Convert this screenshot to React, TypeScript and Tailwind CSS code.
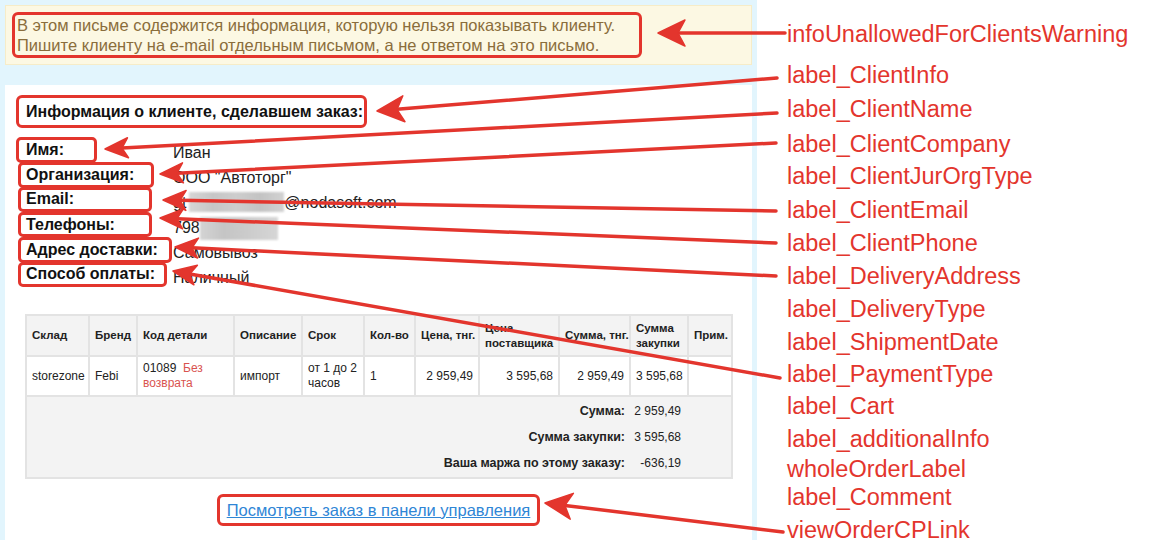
import React from 'react';

const RED = '#e3352d';

type Arr = { x1: number; y1: number; x2: number; y2: number; big?: boolean };

const arrows: Arr[] = [
  { x1: 785, y1: 33, x2: 658, y2: 33, big: true },
  { x1: 777, y1: 78, x2: 377, y2: 111, big: true },
  { x1: 777, y1: 113, x2: 105, y2: 149 },
  { x1: 776, y1: 143, x2: 160, y2: 174 },
  { x1: 776, y1: 211, x2: 163, y2: 200 },
  { x1: 776, y1: 243, x2: 160, y2: 218 },
  { x1: 776, y1: 276, x2: 175, y2: 247 },
  { x1: 780, y1: 378, x2: 173, y2: 271 },
  { x1: 783, y1: 532, x2: 545, y2: 503, big: true },
];

function Arrow({ x1, y1, x2, y2, big }: Arr) {
  const dx = x2 - x1;
  const dy = y2 - y1;
  const len = Math.hypot(dx, dy);
  const ux = dx / len;
  const uy = dy / len;
  const nx = -uy;
  const ny = ux;
  const L = big ? 27 : 23;
  const W = big ? 13 : 10;
  const N = big ? 20 : 17;
  const bx = x2 - ux * L;
  const by = y2 - uy * L;
  const pts = `${x2},${y2} ${bx + nx * W},${by + ny * W} ${x2 - ux * N},${y2 - uy * N} ${bx - nx * W},${by - ny * W}`;
  return (
    <g>
      <line x1={x1} y1={y1} x2={x2 - ux * N} y2={y2 - uy * N} stroke={RED} strokeWidth={3.5} strokeLinecap="round" />
      <polygon points={pts} fill={RED} stroke={RED} strokeWidth={1.5} strokeLinejoin="round" />
    </g>
  );
}

const notes = [
  { text: 'infoUnallowedForClientsWarning', cls: 'h-[41px]' },
  { text: 'label_ClientInfo', cls: 'h-[34px]' },
  { text: 'label_ClientName', cls: 'h-[35px]' },
  { text: 'label_ClientCompany', cls: 'h-[32px]' },
  { text: 'label_ClientJurOrgType', cls: 'h-[34px]' },
  { text: 'label_ClientEmail', cls: 'h-[33px]' },
  { text: 'label_ClientPhone', cls: 'h-[33px]' },
  { text: 'label_DeliveryAddress', cls: 'h-[33px]' },
  { text: 'label_DeliveryType', cls: 'h-[33px]' },
  { text: 'label_ShipmentDate', cls: 'h-[32px]' },
  { text: 'label_PaymentType', cls: 'h-[32px]' },
  { text: 'label_Cart', cls: 'h-[33px]' },
  { text: 'label_additionalInfo', cls: 'h-[30px]' },
  { text: 'wholeOrderLabel', cls: 'h-[28px]' },
  { text: 'label_Comment', cls: 'h-[33px]' },
  { text: 'viewOrderCPLink', cls: 'h-[33px]' },
];

const cell = 'border-2 border-[#e3e3e3] px-[5px] align-middle';

export default function App() {
  return (
    <div className="relative flex w-[1169px] h-[552px] bg-white font-['Liberation_Sans',Arial,sans-serif] overflow-hidden">
      {/* email preview */}
      <div className="flex flex-col w-[757px] h-[540px] bg-[#e2f5fd] pt-[5px] px-[5px]">
        <div className="h-[60px] bg-[#fcf8e3] border border-[#f6ecc8] pl-[6px] pt-[6px]">
          <div className="w-[630px] h-[46px] border-[3px] border-[#e3352d] rounded-[6px] pl-[2px] text-[16.5px] leading-[20px] text-[#8a6d3b]">
            В этом письме содержится информация, которую нельзя показывать клиенту.
            <br />
            Пишите клиенту на e-mail отдельным письмом, а не ответом на это письмо.
          </div>
        </div>

        <div className="mt-[20px] flex-1 bg-white pt-[10px] text-[#111]">
          <div className="ml-[11px] w-[351px] h-[33px] border-[3px] border-[#e3352d] rounded-[6px] pl-[7px] text-[16px] font-bold leading-[27px]">
            Информация о клиенте, сделавшем заказ:
          </div>

          <div className="mt-[9px] flex flex-col text-[16px]">
            <div className="flex h-[25px]">
              <div className="ml-[11px] w-[81px] h-[26px] border-[3px] border-[#e3352d] rounded-[5px] pl-[7px] font-bold leading-[20px]">Имя:</div>
              <div className="ml-[76px] pt-[3px] leading-[25px] text-[#222]">Иван</div>
            </div>
            <div className="flex h-[25px]">
              <div className="ml-[13px] w-[136px] h-[26px] border-[3px] border-[#e3352d] rounded-[5px] pl-[5px] font-bold leading-[20px]">Организация:</div>
              <div className="ml-[19px] pt-[3px] leading-[25px] text-[#222]">ООО "Автоторг"</div>
            </div>
            <div className="flex h-[25px]">
              <div className="ml-[13px] w-[134px] h-[25px] border-[3px] border-[#e3352d] rounded-[5px] pl-[5px] font-bold leading-[18px]">Email:</div>
              <div className="ml-[21px] flex items-start pt-[3px] leading-[25px] text-[#222]">
                <span>gt</span>
                <span className="mt-[2px] ml-[3px] w-[95px] h-[20px] blur-[1px] bg-[linear-gradient(90deg,#d6d6d6,#c6c6c6_25%,#cdcdcd_50%,#c3c3c3_75%,#d2d2d2)]" />
                <span>@nodasoft.com</span>
              </div>
            </div>
            <div className="flex h-[25px]">
              <div className="ml-[13px] w-[134px] h-[25px] border-[3px] border-[#e3352d] rounded-[5px] pl-[5px] font-bold leading-[20px]">Телефоны:</div>
              <div className="ml-[21px] flex items-start pt-[3px] leading-[25px] text-[#222]">
                <span>798</span>
                <span className="mt-[2px] w-[78px] h-[23px] blur-[1px] bg-[linear-gradient(90deg,#d4d4d4,#c5c5c5_30%,#cbcbcb_60%,#d6d6d6)]" />
              </div>
            </div>
            <div className="flex h-[25px]">
              <div className="ml-[13px] w-[154px] h-[26px] border-[3px] border-[#e3352d] rounded-[5px] pl-[5px] font-bold leading-[20px]">Адрес доставки:</div>
              <div className="ml-[1px] pt-[3px] leading-[25px] text-[#222]">Самовывоз</div>
            </div>
            <div className="flex h-[25px]">
              <div className="ml-[13px] w-[149px] h-[25px] border-[3px] border-[#e3352d] rounded-[5px] pl-[5px] font-bold leading-[18px]">Способ оплаты:</div>
              <div className="ml-[6px] pt-[3px] leading-[25px] text-[#222]">Наличный</div>
            </div>
          </div>

          <table className="mt-[27px] ml-[20px] w-[706px] table-fixed border-collapse text-[12px] leading-[15px] text-[#222]">
            <colgroup>
              <col className="w-[63px]" />
              <col className="w-[48px]" />
              <col className="w-[97px]" />
              <col className="w-[68px]" />
              <col className="w-[62px]" />
              <col className="w-[51px]" />
              <col className="w-[64px]" />
              <col className="w-[80px]" />
              <col className="w-[71px]" />
              <col className="w-[58px]" />
              <col className="w-[44px]" />
            </colgroup>
            <thead>
              <tr className="h-[41px] bg-[#f3f3f3] text-[11.5px] font-bold text-left">
                <th className={cell}>Склад</th>
                <th className={cell}>Бренд</th>
                <th className={cell}>Код детали</th>
                <th className={`${cell} whitespace-nowrap`}>Описание</th>
                <th className={cell}>Срок</th>
                <th className={`${cell} whitespace-nowrap`}>Кол-во</th>
                <th className={`${cell} whitespace-nowrap`}>Цена, тнг.</th>
                <th className={cell}>Цена поставщика</th>
                <th className={`${cell} whitespace-nowrap`}>Сумма, тнг.</th>
                <th className={cell}>Сумма закупки</th>
                <th className={cell}>Прим.</th>
              </tr>
            </thead>
            <tbody>
              <tr className="h-[40px]">
                <td className={cell}>storezone</td>
                <td className={cell}>Febi</td>
                <td className={cell}>
                  01089&nbsp; <span className="text-[#d9534f]">Без возврата</span>
                </td>
                <td className={cell}>импорт</td>
                <td className={cell}>
                  от 1 до 2
                  <br />
                  часов
                </td>
                <td className={cell}>1</td>
                <td className={`${cell} text-right whitespace-nowrap`}>2 959,49</td>
                <td className={`${cell} text-right whitespace-nowrap`}>3 595,68</td>
                <td className={`${cell} text-right whitespace-nowrap`}>2 959,49</td>
                <td className={`${cell} text-right whitespace-nowrap`}>3 595,68</td>
                <td className={cell}></td>
              </tr>
              <tr className="bg-[#f3f3f3]">
                <td colSpan={11} className="border-2 border-[#e3e3e3] p-0">
                  <div className="flex flex-col py-[1px]">
                    {[
                      ['Сумма:', '2 959,49'],
                      ['Сумма закупки:', '3 595,68'],
                      ['Ваша маржа по этому заказу:', '-636,19'],
                    ].map(([l, v]) => (
                      <div key={l} className="flex h-[26px] items-center">
                        <div className="flex-1 text-right font-bold pr-[4px] text-[12.5px]">{l}</div>
                        <div className="w-[58px] text-right pr-[6px] whitespace-nowrap">{v}</div>
                        <div className="w-[44px]" />
                      </div>
                    ))}
                  </div>
                </td>
              </tr>
            </tbody>
          </table>

          <div className="mt-[15px] flex justify-center">
            <div className="w-[323px] h-[32px] border-[3px] border-[#e3352d] rounded-[6px] flex items-center justify-center">
              <a href="#" className="text-[16.5px] text-[#2f86d6] underline whitespace-nowrap">
                Посмотреть заказ в панели управления
              </a>
            </div>
          </div>
        </div>
      </div>

      {/* annotation list */}
      <div className="pl-[30px] pt-[18px] flex flex-col text-[23.5px] leading-[33px] text-[#e3352d]">
        {notes.map((n) => (
          <div key={n.text} className={n.cls}>
            {n.text}
          </div>
        ))}
      </div>

      <svg className="absolute inset-0 pointer-events-none" width={1169} height={552}>
        {arrows.map((a, i) => (
          <Arrow key={i} {...a} />
        ))}
      </svg>
    </div>
  );
}
